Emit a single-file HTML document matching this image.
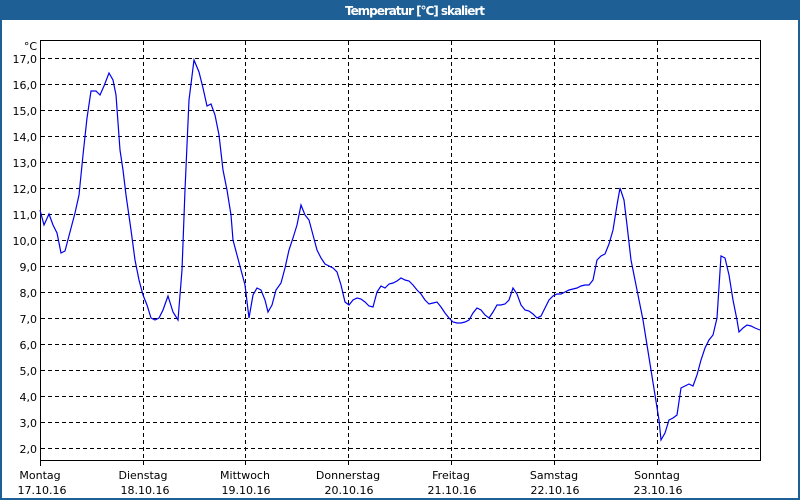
<!DOCTYPE html>
<html><head><meta charset="utf-8"><style>
html,body{margin:0;padding:0;}
body{width:800px;height:500px;overflow:hidden;background:#fff;font-family:Tahoma,"DejaVu Sans","Liberation Sans",sans-serif;}
</style></head><body>
<svg width="800" height="500" xmlns="http://www.w3.org/2000/svg" style="display:block">
<rect x="0" y="0" width="800" height="500" fill="#1e5f96"/>
<rect x="2" y="20" width="796" height="478" fill="#fff"/>
<text x="415" y="15" text-anchor="middle" fill="#fff" font-weight="bold" font-size="12" font-family="DejaVu Sans,sans-serif" textLength="140">Temperatur [°C] skaliert</text>
<g stroke="#000" stroke-width="1" stroke-dasharray="4,3" shape-rendering="crispEdges">
<line x1="41" x2="760" y1="58.5" y2="58.5"/><line x1="41" x2="760" y1="84.5" y2="84.5"/><line x1="41" x2="760" y1="110.5" y2="110.5"/><line x1="41" x2="760" y1="136.5" y2="136.5"/><line x1="41" x2="760" y1="162.5" y2="162.5"/><line x1="41" x2="760" y1="188.5" y2="188.5"/><line x1="41" x2="760" y1="214.5" y2="214.5"/><line x1="41" x2="760" y1="240.5" y2="240.5"/><line x1="41" x2="760" y1="266.5" y2="266.5"/><line x1="41" x2="760" y1="292.5" y2="292.5"/><line x1="41" x2="760" y1="318.5" y2="318.5"/><line x1="41" x2="760" y1="344.5" y2="344.5"/><line x1="41" x2="760" y1="370.5" y2="370.5"/><line x1="41" x2="760" y1="396.5" y2="396.5"/><line x1="41" x2="760" y1="422.5" y2="422.5"/><line x1="41" x2="760" y1="448.5" y2="448.5"/>
<line x1="143.5" x2="143.5" y1="41" y2="466"/><line x1="245.5" x2="245.5" y1="41" y2="466"/><line x1="348.5" x2="348.5" y1="41" y2="466"/><line x1="451.5" x2="451.5" y1="41" y2="466"/><line x1="554.5" x2="554.5" y1="41" y2="466"/><line x1="657.5" x2="657.5" y1="41" y2="466"/>
</g>
<g stroke="#000" stroke-width="1" shape-rendering="crispEdges">
<line x1="40.5" x2="40.5" y1="40" y2="466"/>
<line x1="40" x2="761" y1="460.5" y2="460.5"/>
<line x1="40" x2="761" y1="40.5" y2="40.5"/>
<line x1="760.5" x2="760.5" y1="40" y2="461"/>
</g>
<g font-size="11" fill="#000" text-anchor="end" font-family="DejaVu Sans,sans-serif">
<text x="37" y="50">°C</text>
<text x="37" y="63">17,0</text><text x="37" y="89">16,0</text><text x="37" y="115">15,0</text><text x="37" y="141">14,0</text><text x="37" y="167">13,0</text><text x="37" y="193">12,0</text><text x="37" y="219">11,0</text><text x="37" y="245">10,0</text><text x="37" y="271">9,0</text><text x="37" y="297">8,0</text><text x="37" y="323">7,0</text><text x="37" y="349">6,0</text><text x="37" y="375">5,0</text><text x="37" y="401">4,0</text><text x="37" y="427">3,0</text><text x="37" y="453">2,0</text>
</g>
<g font-size="11" fill="#000" text-anchor="middle" font-family="DejaVu Sans,sans-serif">
<text x="40" y="479">Montag</text><text x="42" y="494">17.10.16</text>
<text x="143" y="479">Dienstag</text><text x="145" y="494">18.10.16</text>
<text x="245" y="479">Mittwoch</text><text x="246" y="494">19.10.16</text>
<text x="348" y="479">Donnerstag</text><text x="349" y="494">20.10.16</text>
<text x="451" y="479">Freitag</text><text x="452" y="494">21.10.16</text>
<text x="554" y="479">Samstag</text><text x="555" y="494">22.10.16</text>
<text x="657" y="479">Sonntag</text><text x="658" y="494">23.10.16</text>
</g>
<polyline fill="none" stroke="#0000ee" stroke-width="1.2" points="40,210 44,225 49,214 53,225 57,233 61,253 65,251 70,232 75,213 79,195 83,155 87,118 91,91 96,91 100,95 104,86 109,73 113,80 116,95 120,150 123,170 126,195 131,230 135,260 139,280 143,295 147,305 151,318 155,320 159,318 163,310 168,296 173,312 178,320 182,270 185,190 189,100 194,60 199,72 203,88 207,106 211,104 215,115 219,135 223,170 227,190 231,215 233,240 237,255 241,270 245,285 249,318 253,295 257,288 261,290 265,300 268,312 272,305 276,290 281,283 285,268 289,250 293,238 297,225 301,205 305,215 309,220 313,235 317,250 321,258 325,264 329,266 333,268 337,272 341,285 345,302 349,305 353,300 357,298 361,299 365,302 369,306 373,307 377,292 381,286 385,288 389,284 393,283 397,281 401,278 405,280 409,281 413,285 417,290 421,294 425,300 429,304 433,303 437,302 441,307 445,313 449,318 453,322 457,323 461,323 465,322 469,320 473,313 477,308 481,310 485,315 489,318 493,312 497,305 501,305 505,304 509,300 513,288 517,294 521,305 525,310 529,311 533,314 537,318 541,316 545,308 549,300 553,296 557,294 561,294 565,292 569,290 573,289 577,288 581,286 585,285 589,285 593,280 597,260 601,256 605,254 609,244 613,230 617,205 620,188 624,200 627,225 631,260 635,280 639,300 643,320 647,345 651,370 655,395 659,420 661,440 665,433 669,420 673,418 677,415 681,388 685,386 689,384 693,386 697,375 701,360 705,348 709,340 713,335 717,318 721,256 725,258 729,275 733,300 737,320 739,332 743,328 747,325 751,326 755,328 760,330"/>
</svg>
</body></html>
